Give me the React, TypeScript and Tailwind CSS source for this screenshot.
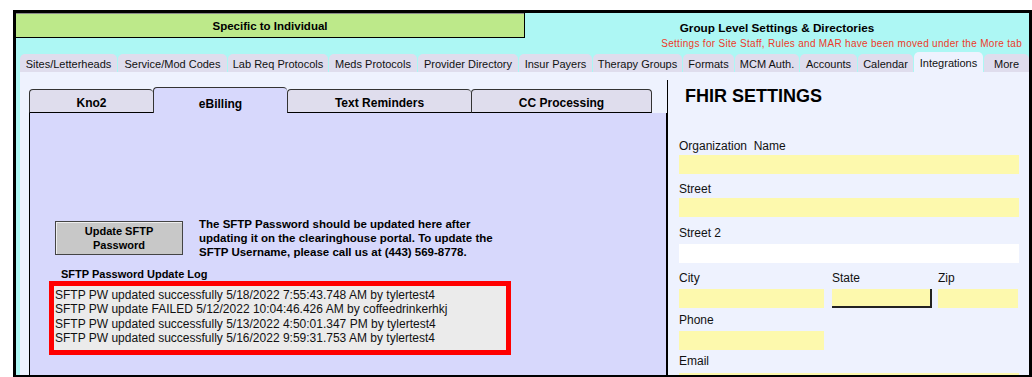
import React from "react";

const TOP_TABS = [
  { label: "Sites/Letterheads", w: "w-[97px]" },
  { label: "Service/Mod Codes", w: "w-[109px]" },
  { label: "Lab Req Protocols", w: "w-[100px]" },
  { label: "Meds Protocols", w: "w-[88px]" },
  { label: "Provider Directory", w: "w-[100px]" },
  { label: "Insur Payers", w: "w-[73px]" },
  { label: "Therapy Groups", w: "w-[89px]" },
  { label: "Formats", w: "w-[51px]" },
  { label: "MCM Auth.", w: "w-[64px]" },
  { label: "Accounts", w: "w-[57px]" },
  { label: "Calendar", w: "w-[55px]" },
  { label: "Integrations", w: "w-[69px]", active: true },
  { label: "More", w: "w-[45px]" },
];

const INNER_TABS = [
  { label: "Kno2", w: "w-[124px]" },
  { label: "eBilling", w: "w-[134px]", active: true },
  { label: "Text Reminders", w: "w-[184px]" },
  { label: "CC Processing", w: "w-[181px]", last: true },
];

const LOG = [
  "SFTP PW updated successfully 5/18/2022 7:55:43.748 AM by tylertest4",
  "SFTP PW update FAILED 5/12/2022 10:04:46.426 AM by coffeedrinkerhkj",
  "SFTP PW updated successfully 5/13/2022 4:50:01.347 PM by tylertest4",
  "SFTP PW updated successfully 5/16/2022 9:59:31.753 AM by tylertest4",
];

function Label({ children, className = "" }: { children: React.ReactNode; className?: string }) {
  return <div className={`text-[12px] leading-[14px] text-[#111] whitespace-pre ${className}`}>{children}</div>;
}

export default function App() {
  return (
    <div className="w-[1032px] h-[377px] bg-white pt-[10px] pl-[13px] overflow-hidden font-['Liberation_Sans',Arial,sans-serif] text-black">
      <div className="w-[1019px] h-[367px] border-t-[3px] border-x-[3px] border-b-[2px] border-black bg-[#adf7f4] flex flex-col overflow-hidden">
        {/* header */}
        <div className="flex h-[39px] shrink-0">
          <div className="w-[509px] flex flex-col">
            <div className="h-[25px] bg-[#bde98a] border-r border-b border-black shadow-[inset_0_1px_0_#8a8a8a] flex items-center justify-center pt-[3px] text-[11.5px] font-bold">
              Specific to Individual
            </div>
          </div>
          <div className="flex-1 flex flex-col items-center">
            <div className="mt-[8px] text-[11.75px] font-bold leading-[14px]">Group Level Settings &amp; Directories</div>
            <div className="self-end pr-[7px] mt-[3px] text-[10px] leading-[12px] tracking-[0.3px] text-[#ee3a2a]">
              Settings for Site Staff, Rules and MAR have been moved under the More tab
            </div>
          </div>
        </div>

        {/* top tab row */}
        <div className="h-[20px] shrink-0 pl-[4px] flex items-end gap-px">
          {TOP_TABS.map((t) => (
            <div
              key={t.label}
              className={`${t.w} ${t.active ? "h-[20px] bg-[#eef2fe] pt-[3px]" : "h-[18px] bg-[#dfdded] pt-[2px]"} rounded-t-[5px] flex items-center justify-center text-[11px] whitespace-nowrap text-[#111]`}
            >
              {t.label}
            </div>
          ))}
        </div>

        {/* content */}
        <div className="flex-1 min-h-0 pl-[4px] flex">
          <div className="flex-1 bg-[#eef2fe] flex">
            {/* left */}
            <div className="w-[647px] pl-[9px] pt-[15px] flex flex-col">
              <div className="h-[26px] flex items-end">
                {INNER_TABS.map((t) => (
                  <div
                    key={t.label}
                    className={`${t.w} ${t.active ? "h-[26px] bg-[#d7d8fc] pt-[6px]" : "h-[24px] bg-[#dfdded] border-b border-b-black pt-[3px]"} border-t border-l border-[#333] ${t.last ? "border-r" : ""} rounded-t-[4px] flex items-center justify-center text-[12px] font-bold`}
                  >
                    {t.label}
                  </div>
                ))}
              </div>
              <div className="flex-1 bg-[#d7d8fc] border-x border-black pl-[25px] pt-[108px]">
                <div className="flex items-start">
                  <div className="w-[128px] h-[34px] bg-[#c8c8c8] border border-[#444] shadow-[inset_1px_1px_0_#eee] flex items-center justify-center text-center text-[11px] leading-[14px] font-bold">
                    Update SFTP
                    <br />
                    Password
                  </div>
                  <div className="ml-[16px] -mt-[4px] w-[300px] text-[11.5px] leading-[14px] font-bold">
                    The SFTP Password should be updated here after updating it on the clearinghouse portal. To update the SFTP Username, please call us at (443) 569-8778.
                  </div>
                </div>
                <div className="ml-[6px] mt-[9px] text-[11px] leading-[13px] font-bold">SFTP Password Update Log</div>
                <div className="-ml-[6px] w-[462px] h-[74px] border-[5px] border-[#ff0000] bg-[#ebebeb] pl-[1px] pt-[2px]">
                  {LOG.map((l) => (
                    <div key={l} className="text-[12px] leading-[14.3px] text-[#111] whitespace-nowrap">
                      {l}
                    </div>
                  ))}
                </div>
              </div>
            </div>

            {/* divider */}
            <div className="w-px bg-black mt-[8px]" />

            {/* right */}
            <div className="flex-1 pl-[11px] pt-[14px] flex flex-col">
              <div className="ml-[6px] text-[18px] leading-[20px] font-bold">FHIR SETTINGS</div>
              <Label className="mt-[33px]">Organization  Name</Label>
              <div className="mt-[2px] w-[340px] h-[19px] shrink-0 bg-[#fdf9ad]" />
              <Label className="mt-[8px]">Street</Label>
              <div className="mt-[2px] w-[340px] h-[19px] shrink-0 bg-[#fdf9ad]" />
              <Label className="mt-[9px]">Street 2</Label>
              <div className="mt-[4px] w-[340px] h-[19px] shrink-0 bg-white" />
              <div className="mt-[8px] flex shrink-0">
                <div className="w-[153px] flex flex-col">
                  <Label>City</Label>
                  <div className="mt-[4px] w-[145px] h-[19px] bg-[#fdf9ad]" />
                </div>
                <div className="w-[106px] flex flex-col">
                  <Label>State</Label>
                  <div className="mt-[4px] w-[100px] h-[19px] bg-[#fdf9ad] border-r-2 border-b-2 border-[#222]" />
                </div>
                <div className="flex-1 flex flex-col">
                  <Label>Zip</Label>
                  <div className="mt-[4px] w-[80px] h-[19px] bg-[#fdf9ad]" />
                </div>
              </div>
              <Label className="mt-[5px]">Phone</Label>
              <div className="mt-[4px] w-[145px] h-[19px] shrink-0 bg-[#fdf9ad]" />
              <Label className="mt-[4px]">Email</Label>
              <div className="mt-[5px] w-[340px] h-[19px] shrink-0 bg-[#fdf9ad]" />
            </div>
          </div>
        </div>
      </div>
    </div>
  );
}
